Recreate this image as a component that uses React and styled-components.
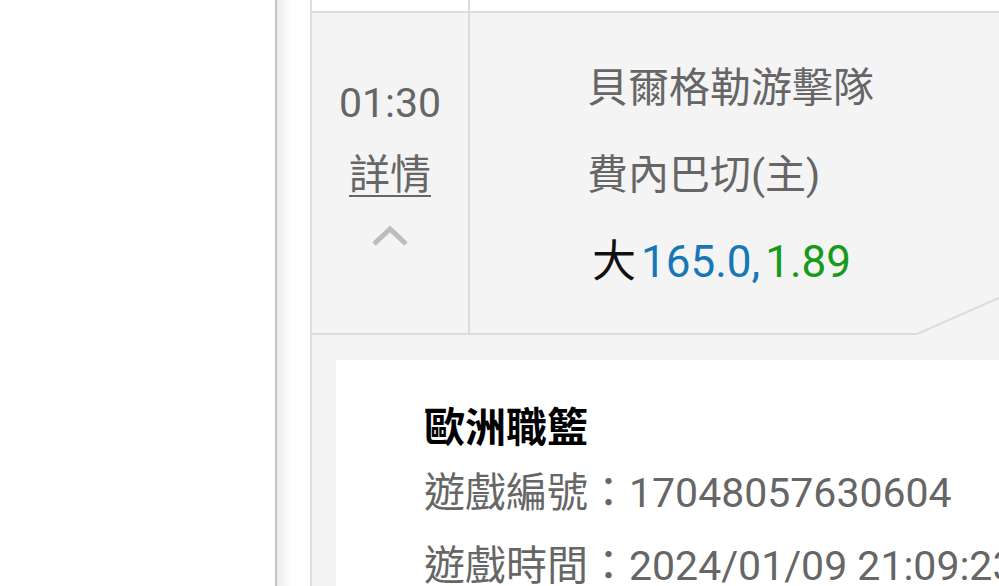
import React from "react";
import styled, { createGlobalStyle } from "styled-components";

const Global = createGlobalStyle`
  html, body { margin: 0; padding: 0; background: #fff; }
  body { font-family: Roboto, "Noto Sans CJK TC", sans-serif; overflow: hidden; }
  #root { width: 999px; height: 586px; overflow: hidden; }
`;

const Page = styled.div`
  display: flex;
  width: 999px;
  height: 586px;
  overflow: hidden;
  background: #fff;
`;

const Blank = styled.div`
  width: 275px;
  flex: none;
  background: #fff;
`;

const Edge = styled.div`
  width: 15px;
  flex: none;
  border-left: 2px solid #c4c4c4;
  background: linear-gradient(to right, #ececec, #fff);
`;

const Content = styled.div`
  flex: 1;
  min-width: 0;
  padding-left: 18px;
  background: #fff;
`;

const Table = styled.div`
  border-left: 2px solid #dcdcdc;
`;

const Row = styled.div`
  position: relative;
  display: grid;
  grid-template-columns: 158px 1fr;
  background: ${(p) => (p.$blank ? "#fff" : "#f4f4f4")};
  height: ${(p) => p.$h}px;
  border-bottom: 2px solid #dcdcdc;
`;

const Cell = styled.div`
  min-width: 0;
  border-right: ${(p) => (p.$first ? "2px solid #dcdcdc" : "none")};
`;

const TimeCell = styled(Cell)`
  display: flex;
  flex-direction: column;
  align-items: center;
  padding-top: 60px;
`;

const Time = styled.div`
  font-size: 41px;
  line-height: 60px;
  color: #666;
`;

const Detail = styled.div`
  margin-top: 12px;
  font-size: 41px;
  line-height: 60px;
  color: #666;
  text-decoration: underline;
  text-decoration-thickness: 2px;
  text-underline-offset: 6px;
`;

const Chevron = styled.svg`
  margin-top: 20px;
  display: block;
`;

const InfoCell = styled(Cell)`
  padding: 32px 0 0 117px;
`;

const Line = styled.div`
  font-size: ${(p) => p.$size || 41}px;
  line-height: 87px;
  color: #666;
  white-space: nowrap;
`;

const Big = styled.span`
  color: #111;
  margin-left: 5px;
`;

const Blue = styled.span`
  color: #1677b8;
  margin-left: 5px;
`;

const Green = styled.span`
  color: #179a1a;
  margin-left: 5px;
`;

const Slant = styled.svg`
  position: absolute;
  right: 0;
  bottom: -2px;
  display: block;
`;

const Expanded = styled.div`
  background: #f4f4f4;
  padding: 25px 0 0 24px;
  height: 400px;
`;

const Card = styled.div`
  background: #fff;
  height: 100%;
  padding: 40px 0 0 88px;
`;

const Title = styled.div`
  font-size: 41px;
  line-height: 57px;
  font-weight: 700;
  color: #000;
`;

const InfoLine = styled.div`
  font-size: 41px;
  line-height: 73px;
  color: #666;
  white-space: nowrap;
`;

export default function App() {
  return (
    <>
      <Global />
      <Page>
        <Blank />
        <Edge />
        <Content>
          <Table>
            <Row $blank $h={11}>
              <Cell $first />
              <Cell />
            </Row>
            <Row $h={320}>
              <TimeCell $first>
                <Time>01:30</Time>
                <Detail>詳情</Detail>
                <Chevron width="36" height="22" viewBox="0 0 36 22">
                  <polyline
                    points="2,19 18,4 34,19"
                    fill="none"
                    stroke="#bdbdbd"
                    strokeWidth="5"
                  />
                </Chevron>
              </TimeCell>
              <InfoCell>
                <Line>貝爾格勒游擊隊</Line>
                <Line>費內巴切(主)</Line>
                <Line $size={44}>
                  <Big>大</Big>
                  <Blue>165.0,</Blue>
                  <Green>1.89</Green>
                </Line>
              </InfoCell>
              <Slant width="84" height="42" viewBox="0 0 84 42">
                <rect x="0" y="36" width="84" height="6" fill="#f4f4f4" />
                <polyline
                  points="0,41 2,41 84,5"
                  fill="none"
                  stroke="#dcdcdc"
                  strokeWidth="2"
                />
              </Slant>
            </Row>
            <Expanded>
              <Card>
                <Title>歐洲職籃</Title>
                <InfoLine>遊戲編號：17048057630604</InfoLine>
                <InfoLine>遊戲時間：2024/01/09 21:09:23</InfoLine>
              </Card>
            </Expanded>
          </Table>
        </Content>
      </Page>
    </>
  );
}
